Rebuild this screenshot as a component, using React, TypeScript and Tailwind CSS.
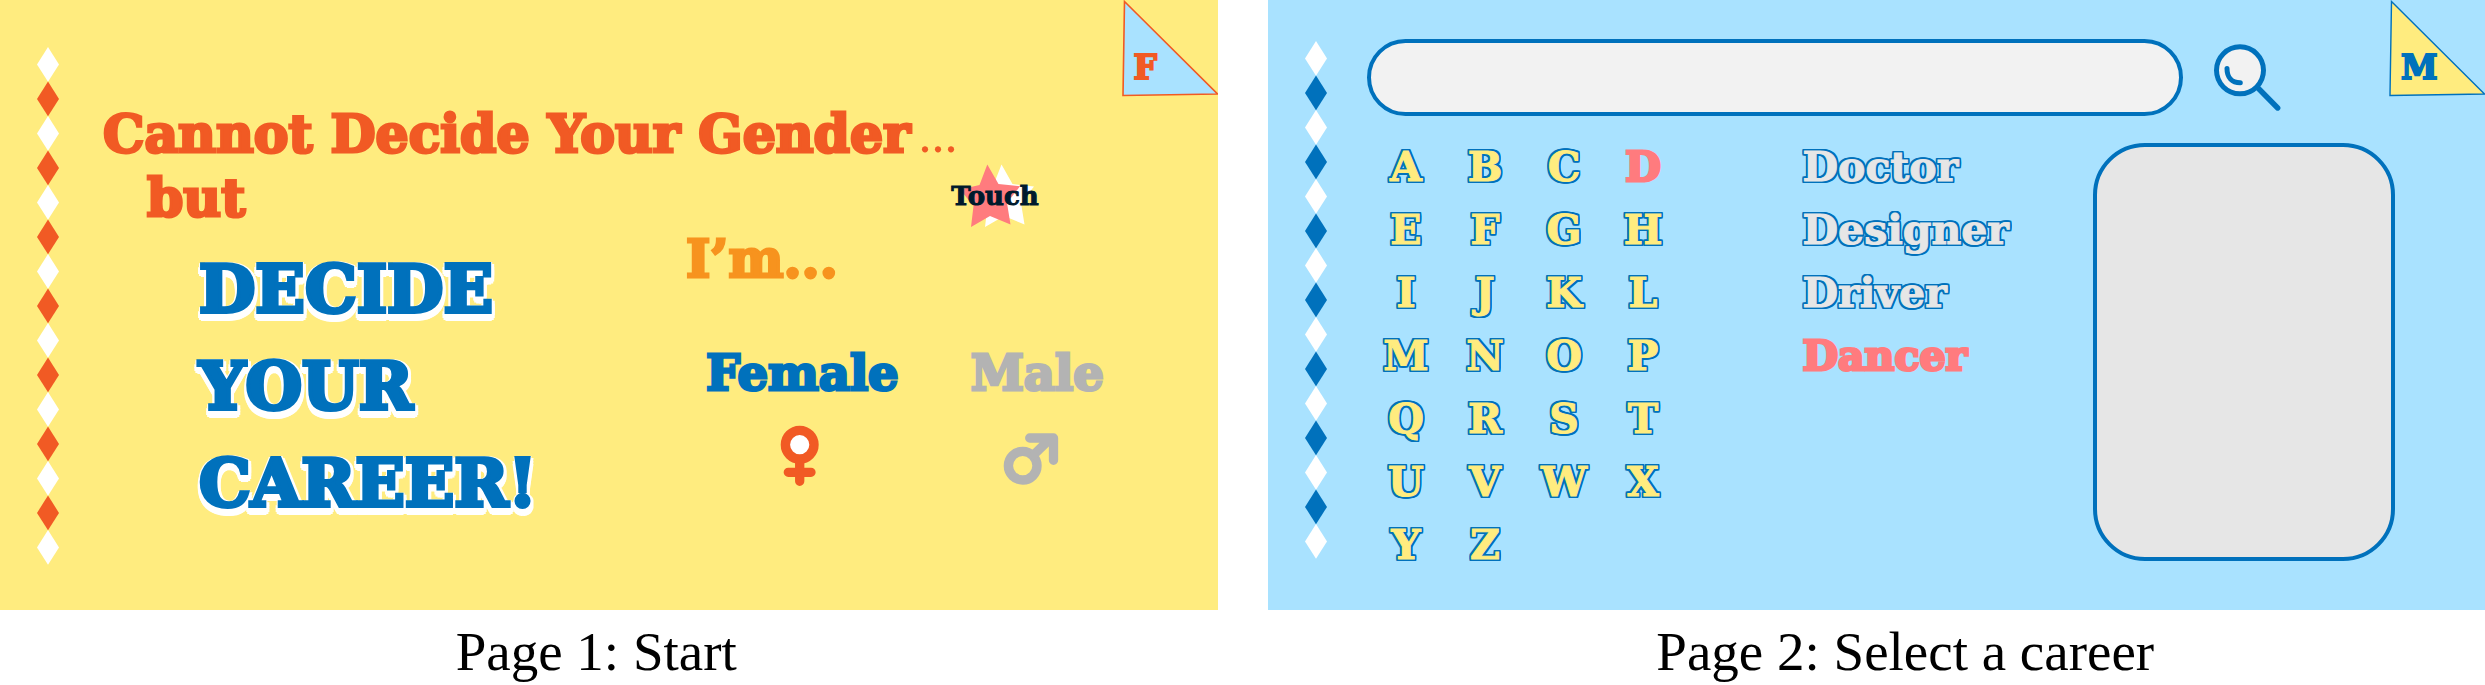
const slab = "font-['DejaVu_Serif',serif] font-bold";
const caption = "pt-3 text-center font-['Liberation_Serif',serif] text-[55px] leading-[60px] text-black";
const outline =
  "[text-shadow:2px_0_#0071bc,-2px_0_#0071bc,0_2px_#0071bc,0_-2px_#0071bc,2px_1px_#0071bc,-2px_1px_#0071bc,2px_-1px_#0071bc,-2px_-1px_#0071bc,1px_2px_#0071bc,-1px_2px_#0071bc,1px_-2px_#0071bc,-1px_-2px_#0071bc,2px_2px_#0071bc,-2px_2px_#0071bc,2px_-2px_#0071bc,-2px_-2px_#0071bc]";

const letters = "ABCDEFGHIJKLMNOPQRSTUVWXYZ".split("");
const careers = ["Doctor", "Designer", "Driver", "Dancer"];

function Diamonds({ color }: { color: string }) {
  return (
    <svg width="22" height="519" viewBox="0 0 22 519" aria-hidden="true">
      {Array.from({ length: 15 }, (_, i) => {
        const y = i * 34.5;
        return (
          <polygon
            key={i}
            points={`11,${y} 22,${y + 17.4} 11,${y + 34.8} 0,${y + 17.4}`}
            fill={i % 2 ? color : "#ffffff"}
          />
        );
      })}
    </svg>
  );
}

type CornerProps = { letter: string; label: string; fill: string; ink: string; line: number; className: string };

function CornerButton({ letter, label, fill, ink, line, className }: CornerProps) {
  return (
    <button type="button" aria-label={label} className="absolute top-0 right-0 h-24 w-24">
      <svg width="96" height="97" viewBox="0 0 96 97" className="absolute inset-0" aria-hidden="true">
        <polygon points="2.5,1.5 95.5,94 1,95.5" fill={fill} stroke={ink} strokeWidth={line} />
      </svg>
      <span className={`${slab} absolute bottom-2 left-3 text-[33px] leading-10 ${className}`}>{letter}</span>
    </button>
  );
}

function TouchStar() {
  return (
    <button type="button" className="mt-[62px] grid shrink-0 place-items-center">
      <svg width="90" height="64" viewBox="0 0 90 64" className="col-start-1 row-start-1" aria-hidden="true">
        <path d="M51.5 0.5L62.5 20L84 22.5L71 39L74.5 60.5L54 52L35 63L37.5 42L24 25.5L43.5 21Z" fill="#ffffff" />
        <path d="M37.3 0.5L48.5 20L70 22.3L57 39L60.5 60.5L40 52L21 63L23.5 42L10 25.5L29.5 21Z" fill="#ff7b7e" />
      </svg>
      <span className={`${slab} col-start-1 row-start-1 text-[26px] leading-8 text-[#001a2c] [-webkit-text-stroke:1px_#001a2c]`}>
        Touch
      </span>
    </button>
  );
}

function FemaleSign() {
  return (
    <svg width="40" height="61" viewBox="0 0 40 61" className="mr-1" aria-hidden="true">
      <circle cx="19.7" cy="19.7" r="14.3" fill="#ffffff" stroke="#f15a24" strokeWidth="9.4" />
      <path d="M19.7 37V56.3M8.3 47.3H31" fill="none" stroke="#f15a24" strokeWidth="9.3" strokeLinecap="round" />
    </svg>
  );
}

function MaleSign() {
  return (
    <svg width="56" height="61" viewBox="0 0 56 61" className="mr-3" aria-hidden="true">
      <circle cx="19.7" cy="40.7" r="14.3" fill="none" stroke="#b3b3b3" strokeWidth="9.4" />
      <path
        d="M31 29.5L48 13M26.7 13H50.5V35.3"
        fill="none"
        stroke="#b3b3b3"
        strokeWidth="9.3"
        strokeLinecap="round"
        strokeLinejoin="round"
      />
    </svg>
  );
}

function StartPage() {
  return (
    <figure className="min-w-0 flex-1">
      <section className="relative flex min-h-[610px] bg-[#ffec7f]">
        <div className="pt-[47px] pl-[37px]">
          <Diamonds color="#f15a24" />
        </div>
        <div className="flex-1 pt-[102px] pl-11">
          <div className="flex items-start">
            <h1 className={`${slab} w-[847px] shrink-0 text-[52px] leading-[63px] whitespace-nowrap text-[#f15a24] [-webkit-text-stroke:3px_#f15a24]`}>
              Cannot Decide Your Gender
              <span className="pl-2 font-['Liberation_Serif',serif] font-normal [-webkit-text-stroke:0px]">...</span>
              <span className="block pl-11">but</span>
            </h1>
            <TouchStar />
          </div>
          <div className="flex">
            <p
              className={`${slab} w-[583px] pt-3 pl-24 text-[65px] leading-[97px] text-[#0071bc] [-webkit-text-stroke:4px_#0071bc] [text-shadow:-4px_3px_#fff,-4px_6px_#fff,-3px_8px_#fff,-1px_9px_#fff,2px_9px_#fff,4px_8px_#fff,5px_6px_#fff,5px_3px_#fff,5px_0_#fff,3px_-2px_#fff,-3px_-1px_#fff]`}
            >
              <span className="block">DECIDE</span>
              <span className="block">YOUR</span>
              <span className="block">CAREER!</span>
            </p>
            <div role="radiogroup" aria-labelledby="gender" className={`${slab} flex-1`}>
              <h2 id="gender" className="text-[52px] leading-[60px] text-[#f7931e] [-webkit-text-stroke:3px_#f7931e]">
                I’m...
              </h2>
              <div className="flex gap-[72px] pt-[54px] pl-5 text-[48px] leading-[60px]">
                <label className="flex flex-col items-center gap-[22px] text-[#0071bc]">
                  <input type="radio" name="gender" className="sr-only" defaultChecked />
                  <span className="[-webkit-text-stroke:3px_#0071bc]">Female</span>
                  <FemaleSign />
                </label>
                <label className="flex flex-col items-center gap-[22px] text-[#b3b3b3]">
                  <input type="radio" name="gender" className="sr-only" />
                  <span className="[-webkit-text-stroke:3px_#b3b3b3]">Male</span>
                  <MaleSign />
                </label>
              </div>
            </div>
          </div>
        </div>
        <CornerButton
          letter="F"
          label="Female"
          fill="#a9e2ff"
          ink="#f15a24"
          line={1.6}
          className="text-[#f15a24] [-webkit-text-stroke:2px_#f15a24]"
        />
      </section>
      <figcaption className={`${caption} pr-[25px]`}>Page 1: Start</figcaption>
    </figure>
  );
}

function CareerPage() {
  return (
    <figure className="min-w-0 flex-1">
      <section className="relative flex min-h-[610px] bg-[#a9e2ff]">
        <div className="pt-[41px] pl-[37px]">
          <Diamonds color="#0071bc" />
        </div>
        <div className="flex-1 pt-[39px] pl-10">
          <form className="flex items-center gap-[30px] pr-[204px]" onSubmit={(e) => e.preventDefault()}>
            <input
              type="search"
              aria-label="Search careers"
              className="h-[77px] min-w-0 flex-1 rounded-full border-4 border-[#0071bc] bg-[#f2f2f2] px-8 text-4xl outline-none"
            />
            <button type="submit" aria-label="Search">
              <svg width="68" height="68" viewBox="0 0 68 68" fill="none" stroke="#0071bc" strokeLinecap="round" aria-hidden="true">
                <path d="M45 44L64.7 64" strokeWidth="5.4" />
                <circle cx="27" cy="26.3" r="23.5" fill="#f2f2f2" strokeWidth="5" />
                <path d="M14 24.5C14 33.5 19 38.8 27.3 38.8" strokeWidth="5" />
              </svg>
            </button>
          </form>
          <div className={`${slab} flex pt-5 text-[41px] leading-[63px]`}>
            <div className="grid w-[316px] grid-cols-4">
              {letters.map((letter) => (
                <button
                  key={letter}
                  type="button"
                  className={
                    letter === "D"
                      ? "text-[#ff7b7e] [-webkit-text-stroke:3px_#ff7b7e]"
                      : `text-[#ffec7f] [-webkit-text-stroke:1px_#ffec7f] ${outline}`
                  }
                >
                  {letter}
                </button>
              ))}
            </div>
            <ul className="flex-1 pl-[120px]">
              {careers.map((career) => (
                <li key={career}>
                  <a
                    href="#career"
                    className={
                      career === "Dancer"
                        ? "text-[#ff7b7e] [-webkit-text-stroke:3px_#ff7b7e]"
                        : `text-[#e6e6e6] [-webkit-text-stroke:1px_#e6e6e6] ${outline}`
                    }
                  >
                    {career}
                  </a>
                </li>
              ))}
            </ul>
            <div id="career" className="mt-[7px] mr-[90px] h-[418px] w-[302px] rounded-[52px] border-4 border-[#0071bc] bg-[#e6e6e6]" />
          </div>
        </div>
        <CornerButton
          letter="M"
          label="Male"
          fill="#ffec7f"
          ink="#0071bc"
          line={1.4}
          className="text-[#0071bc] [-webkit-text-stroke:2px_#0071bc]"
        />
      </section>
      <figcaption className={`${caption} pl-[58px]`}>Page 2: Select a career</figcaption>
    </figure>
  );
}

export default function App() {
  return (
    <main className="flex gap-[50px] bg-white">
      <StartPage />
      <CareerPage />
    </main>
  );
}
